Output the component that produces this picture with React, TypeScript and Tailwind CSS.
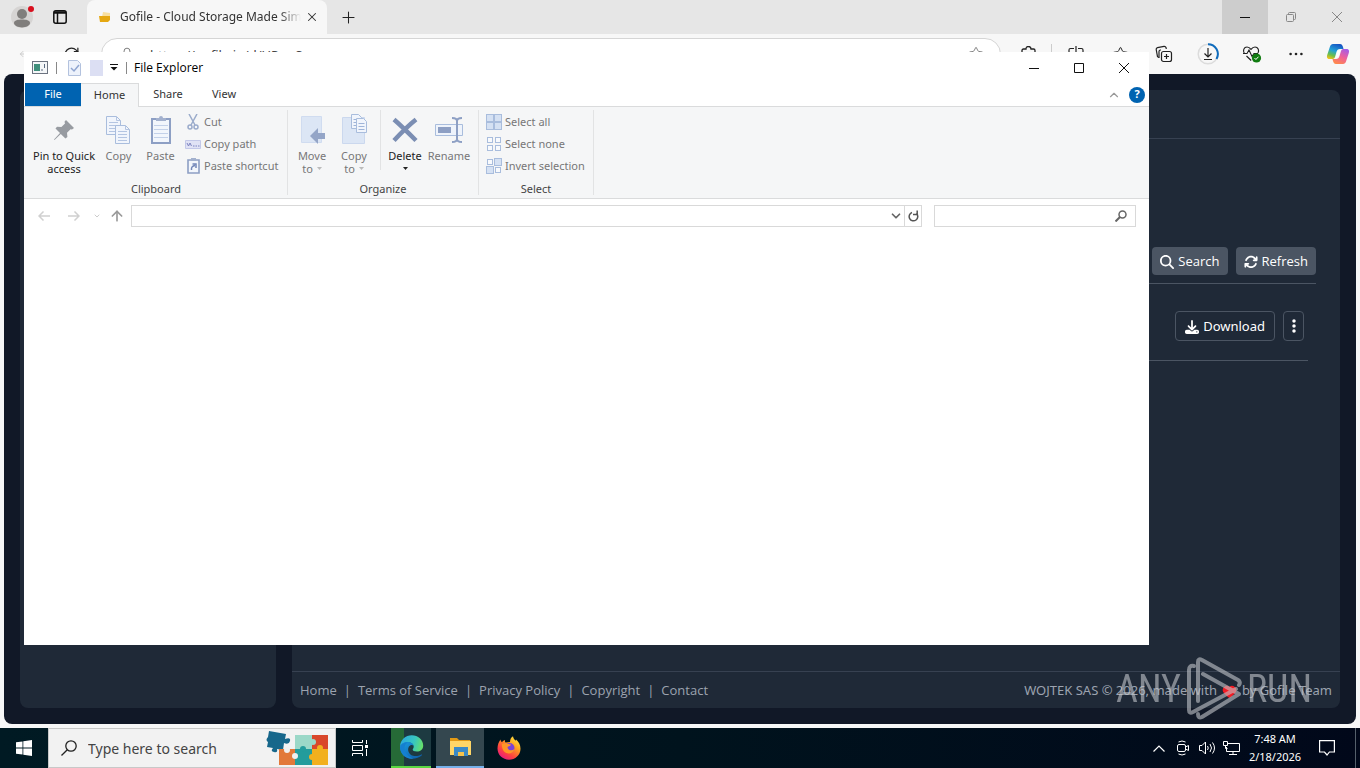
import type { ReactNode } from "react";
import { clsx } from "clsx";
import { FaDownload, FaEllipsisVertical, FaMagnifyingGlass, FaArrowsRotate } from "react-icons/fa6";
import {
  ArrowUp,
  ChevronDown,
  ChevronUp,
  Heart,
  Lock,
  MoveLeft,
  Plus,
  RotateCw,
  Star,
  X,
} from "lucide-react";

const footerLinks = ["Home", "Terms of Service", "Privacy Policy", "Copyright", "Contact"];

/* ---------- Edge ---------- */

function BrowserTabs() {
  return (
    <div className="flex h-[34px] shrink-0 items-center bg-[#e6e6e6]">
      <button aria-label="Profile" className="ml-2 flex h-7 w-7 items-center justify-center">
        <svg width="26" height="26" viewBox="0 0 26 26">
          <circle cx="13" cy="13" r="11" fill="#d6d4d3" />
          <circle cx="13" cy="10" r="5" fill="#807e7c" />
          <path d="M5 19c0-3 4-3.600 8-3.600s8 .6 8 3.600c0 2.600-4 4.400-8 4.400S5 21.600 5 19z" fill="#807e7c" />
          <circle cx="22" cy="5" r="3" fill="#d80f1e" />
        </svg>
      </button>
      <button aria-label="Tab actions" className="ml-4 flex h-7 w-4 items-center justify-center">
        <svg width="14" height="14" viewBox="0 0 14 14" fill="none" stroke="#111">
          <rect x=".8" y=".8" width="12.400" height="12.400" rx="2" strokeWidth="1.500" />
          <path d="M1 2.500h12" strokeWidth="2.500" />
          <path d="M4.500 3v10" strokeWidth="1.500" />
        </svg>
      </button>
      <div className="ml-[19px] flex h-full w-60 items-center rounded-t-lg bg-[#f7f7f7] pr-2 pl-3">
        <svg width="12" height="12" viewBox="0 0 12 12" className="shrink-0">
          <path d="M4 1l7 1v4H3z" fill="#f8dfa0" />
          <path d="M0 5h11v4l-2 2H1z" fill="#e5a812" />
        </svg>
        <span className="ml-[9px] flex-1 overflow-hidden mask-r-from-88% text-xs whitespace-nowrap text-[#333]">
          Gofile - Cloud Storage Made Simple
        </span>
        <button aria-label="Close tab" className="ml-1">
          <X size={14} strokeWidth={1.8} color="#333" />
        </button>
      </div>
      <button aria-label="New tab" className="ml-3">
        <Plus size={19} strokeWidth={1.3} color="#222" />
      </button>
      <div className="ml-auto flex h-full">
        <button aria-label="Minimize" className="flex w-[46px] items-center justify-center bg-[#cdcdcd]">
          <svg width="10" height="10" viewBox="0 0 10 10">
            <path d="M0 5.500h10" stroke="#111" />
          </svg>
        </button>
        <button aria-label="Restore" className="flex w-[46px] items-center justify-center">
          <svg width="10" height="10" viewBox="0 0 10 10" fill="none" stroke="#888">
            <rect x=".5" y="2.500" width="7" height="7" rx="1" />
            <path d="M2.500 2V1.500q0-1 1-1h5q1 0 1 1v5q0 1-1 1h-.5" />
          </svg>
        </button>
        <button aria-label="Close" className="flex w-[46px] items-center justify-center">
          <svg width="10" height="10" viewBox="0 0 10 10">
            <path d="m0 0 10 10M10 0 0 10" stroke="#888" />
          </svg>
        </button>
      </div>
    </div>
  );
}

function ToolButton({ label, children }: { label: string; children: ReactNode }) {
  return (
    <button aria-label={label} className="flex h-full w-11 shrink-0 items-center justify-center">
      {children}
    </button>
  );
}

function BrowserToolbar() {
  return (
    <div className="flex h-10 shrink-0 items-center bg-[#f7f7f7] pl-[5px]">
      <ToolButton label="Back">
        <MoveLeft size={16} strokeWidth={1.2} color="#c4c4c4" />
      </ToolButton>
      <ToolButton label="Reload">
        <RotateCw size={17} strokeWidth={1.7} color="#222" />
      </ToolButton>
      <div className="ml-2 flex h-8 flex-1 items-center rounded-full border border-[#d5d5d5] bg-white pr-4 pl-[18px]">
        <Lock size={14} strokeWidth={1.3} color="#555" />
        <input
          aria-label="Address and search bar"
          defaultValue="https://gofile.io/d/UPwcS"
          className="ml-4 min-w-0 flex-1 pt-1 text-[13px] text-[#444]"
        />
        <Star size={16} strokeWidth={1.2} color="#666" />
      </div>
      <span className="w-[6px]" />
      <ToolButton label="Extensions">
        <svg width="16" height="16" viewBox="0 0 16 16" fill="none" stroke="#222" strokeWidth="1.300">
          <path d="M1 4.500Q1 3 2.500 3H5q0-2.500 2.500-2.500T10 3h2.500Q14 3 14 4.500V7q-2.500 0-2.500 2.200T14 11.500V14q0 1.500-1.500 1.500h-10Q1 15.500 1 14z" />
        </svg>
      </ToolButton>
      <span className="mr-0.5 h-5 w-px bg-[#ccc]" />
      <ToolButton label="Split screen">
        <svg width="16" height="16" viewBox="0 0 16 16" fill="none" stroke="#222" strokeWidth="1.200">
          <path d="M6 2.500H2.500Q1 2.500 1 4v8q0 1.500 1.500 1.500H6M10 2.500h3.500Q15 2.500 15 4v8q0 1.500-1.500 1.500H10M8 0v16" />
        </svg>
      </ToolButton>
      <ToolButton label="Favorites">
        <Star size={17} strokeWidth={1.4} color="#222" />
      </ToolButton>
      <ToolButton label="Collections">
        <svg width="18" height="18" viewBox="0 0 18 18" fill="none" stroke="#222" strokeWidth="1.200">
          <path d="M4 12.500 2.500 11.700 1.200 4.500Q1 3 2.500 2.600L9 1.300q1.500-.2 2 1.200l.3 1.500" />
          <path d="M4 13V6.500Q4 5 5.500 5H6" />
          <rect x="6.500" y="6.500" width="10" height="10" rx="2" />
          <path d="M11.500 9v5M9 11.500h5" />
        </svg>
      </ToolButton>
      <ToolButton label="Downloads">
        <svg width="22" height="22" viewBox="0 0 22 22" fill="none">
          <circle cx="11" cy="11" r="9.800" stroke="#dcdcdc" strokeWidth="1.500" />
          <path d="M11 1.200a9.800 9.800 0 0 1 8.500 14.700" stroke="#0f6cbd" strokeWidth="2" />
          <path d="M11 5v9M7.500 10.500 11 14l3.500-3.500M7 16.500h8" stroke="#222" strokeWidth="1.200" />
        </svg>
      </ToolButton>
      <ToolButton label="Browser essentials">
        <svg width="20" height="18" viewBox="0 0 20 18" fill="none">
          <path d="M2.300 8.500C.5 5.500 2 2 5 2c2 0 3 1 4 2.300C10 3 11 2 13 2c3 0 4.500 3.200 3 6M4.500 11l4.700 4.500" stroke="#222" strokeWidth="1.200" />
          <path d="M1 8.500h4l2-3.500 3 6.500 2-3h4" stroke="#222" strokeWidth="1.100" />
          <circle cx="14.500" cy="13" r="4.600" fill="#107c10" />
          <path d="m12.500 13 1.400 1.500 2.600-2.800" stroke="#fff" />
        </svg>
      </ToolButton>
      <ToolButton label="Settings and more">
        <svg width="14" height="4" viewBox="0 0 14 4" fill="#222">
          <circle cx="1.600" cy="2" r="1.300" />
          <circle cx="7" cy="2" r="1.300" />
          <circle cx="12.400" cy="2" r="1.300" />
        </svg>
      </ToolButton>
      <button aria-label="Copilot" className="mr-0.5 flex h-full w-10 shrink-0 items-center justify-center">
        <svg width="24" height="22" viewBox="0 0 24 22">
          <defs>
            <linearGradient id="copilot-a" x1=".6" y1="0" x2=".2" y2="1">
              <stop offset="0" stopColor="#1657c5" />
              <stop offset=".45" stopColor="#22a2d6" />
              <stop offset=".75" stopColor="#6bbf4b" />
              <stop offset="1" stopColor="#f2c21a" />
            </linearGradient>
            <linearGradient id="copilot-b" x1=".8" y1="0" x2=".3" y2="1">
              <stop offset="0" stopColor="#a45be8" />
              <stop offset=".5" stopColor="#ee5f9b" />
              <stop offset="1" stopColor="#ff8a4c" />
            </linearGradient>
          </defs>
          <path d="M7 1h7c2 0 2.500 1.500 3 3l.5 2H14c-2 0-3 1-3.500 3L9 14c-.5 1.500-1.500 2-3 2H3.500C1 16 .6 14 1.200 12L4 3.500C4.500 2 5.500 1 7 1z" fill="url(#copilot-a)" />
          <path d="M17 21h-7c-2 0-2.500-1.500-3-3l-.5-2H10c2 0 3-1 3.500-3L15 8c.5-1.500 1.500-2 3-2h2.500c2.500 0 2.900 2 2.300 4L20 18.500c-.5 1.500-1.500 2.500-3 2.500z" fill="url(#copilot-b)" />
          <path d="m11 8 3.500-1.500L13 13l-3 2z" fill="#fff" opacity=".75" />
        </svg>
      </button>
    </div>
  );
}

function GofilePage() {
  return (
    <div className="flex min-h-0 flex-1 gap-4 rounded-lg bg-[#111827] p-4 font-['Open_Sans','Noto_Sans',sans-serif]">
      <aside className="w-64 shrink-0 rounded-lg bg-[#1f2937]" />
      <main className="flex min-w-0 flex-1 flex-col rounded-lg bg-[#1f2937] text-white">
        <header className="h-[49px] shrink-0 border-b border-[#374151]" />
        <section className="flex-1 px-6 pt-[108px]">
          <div className="flex justify-end gap-2 border-b border-[#4b5563] pb-2">
            <button className="flex h-7 items-center gap-1 rounded bg-[#4b5563] px-2 pt-px text-[13px]">
              <FaMagnifyingGlass size={14} /> Search
            </button>
            <button className="flex h-7 items-center gap-1 rounded bg-[#4b5563] px-2 pt-px text-[13px]">
              <FaArrowsRotate size={14} /> Refresh
            </button>
          </div>
          <div className="mx-2 mt-2 flex justify-end gap-2 border-b border-[#4b5563] px-1 pt-[19px] pb-[19px]">
            <button className="flex h-[30px] items-center gap-1 rounded border border-[#4b5563] px-[9px] pt-px font-['Noto_Sans',sans-serif] text-[13px]">
              <FaDownload size={14} /> Download
            </button>
            <button
              aria-label="More actions"
              className="flex h-[30px] w-[21px] items-center justify-center rounded border border-[#4b5563]"
            >
              <FaEllipsisVertical size={16} />
            </button>
          </div>
        </section>
        <footer className="flex h-[37px] shrink-0 items-center justify-between border-t border-[#374151] px-2 pt-0.5 text-[13px] text-[#9ca3af]">
          <nav className="flex">
            {footerLinks.map((link, i) => (
              <span key={link}>
                {i > 0 && <span className="px-[7px]">|</span>}
                <a href="#">{link}</a>
              </span>
            ))}
          </nav>
          <p className="flex items-center gap-1 font-['Noto_Sans',sans-serif]">
            WOJTEK SAS © 2026, made with
            <Heart size={15} fill="#f31b24" color="#f31b24" className="mx-px" />
            by Gofile Team
          </p>
        </footer>
      </main>
    </div>
  );
}

function Watermark() {
  return (
    <div className="absolute right-12 bottom-[47px] flex items-center gap-1 font-['Roboto_Condensed','Open_Sans_Condensed','Roboto',sans-serif] text-[38px] leading-none text-[#c3c6cb] opacity-60">
      <span>ANY</span>
      <svg width="58" height="64" viewBox="0 0 58 64" fill="none" stroke="currentColor" strokeWidth="4" strokeLinejoin="round" strokeLinecap="round">
        <path d="M9 9q-5-1-5 4v40q0 4 4 2l43-23" />
        <path d="M13 44V5q0-4 4-2l36 20q3 2 1 5" />
        <path d="M18 17l36 20-37 23q-4 2-4-3" />
      </svg>
      <span>RUN</span>
    </div>
  );
}

/* ---------- File Explorer ---------- */

function WindowTitle() {
  return (
    <div className="flex h-[31px] shrink-0 items-center pl-2">
      <svg width="16" height="14" viewBox="0 0 16 14">
        <rect x=".5" y=".5" width="15" height="12" fill="#f4f6f8" stroke="#6c7380" />
        <rect x="2" y="3" width="6" height="7" fill="#3f8f7c" />
        <path d="M10 8v2M12.500 3v4" stroke="#5a6a80" />
      </svg>
      <span className="ml-2 h-3 w-px bg-[#888]" />
      <button aria-label="Properties" className="ml-[11px]">
        <svg width="13" height="16" viewBox="0 0 13 16" fill="none">
          <path d="M.5.500h9l3 3v12H.5z" fill="#edf2fb" stroke="#b3c2de" />
          <path d="m3 8 3 3 5-6" stroke="#8fa5d0" strokeWidth="1.500" />
        </svg>
      </button>
      <button aria-label="New folder" className="ml-[9px] h-4 w-[13px] bg-[#dcdff3]" />
      <button aria-label="Customize toolbar" className="ml-[7px]">
        <svg width="8" height="7" viewBox="0 0 8 7">
          <path d="M0 .5h8" stroke="#111" />
          <path d="M.5 3h7L4 6.500z" fill="#111" />
        </svg>
      </button>
      <span className="ml-2 h-3 w-px bg-[#888]" />
      <h1 className="ml-[7px] font-['Open_Sans','Noto_Sans',sans-serif] text-xs text-black">File Explorer</h1>
      <div className="ml-auto flex h-full pr-[3px]">
        <button aria-label="Minimize window" className="flex w-[45px] items-center justify-center">
          <svg width="10" height="10" viewBox="0 0 10 10">
            <path d="M0 5.500h10" stroke="#111" />
          </svg>
        </button>
        <button aria-label="Maximize window" className="flex w-[45px] items-center justify-center">
          <svg width="10" height="10" viewBox="0 0 10 10">
            <path d="M.5.500h9v9h-9z" stroke="#111" fill="none" />
          </svg>
        </button>
        <button aria-label="Close window" className="flex w-[45px] items-center justify-center">
          <svg width="10" height="10" viewBox="0 0 10 10">
            <path d="m0 0 10 10M10 0 0 10" stroke="#111" />
          </svg>
        </button>
      </div>
    </div>
  );
}

function RibbonTabs() {
  return (
    <div className="flex h-6 shrink-0 border-b border-[#dadbdc] pl-px text-[11px] text-[#333]">
      <button className="w-14 bg-[#0063b1] text-white">File</button>
      <button className="-mb-px w-[58px] border-t border-r border-[#dadbdc] bg-[#f5f6f7]">Home</button>
      <button className="w-[58px]">Share</button>
      <button className="w-[54px]">View</button>
      <div className="ml-auto flex items-center gap-2 pr-1">
        <ChevronUp size={14} strokeWidth={2} color="#999" />
        <button
          aria-label="Help"
          className="flex h-4 w-4 items-center justify-center rounded-full bg-[#0063b1] text-[11px] font-bold text-white"
        >
          ?
        </button>
      </div>
    </div>
  );
}

interface BigButtonProps {
  icon: ReactNode;
  lines: string[];
  enabled?: boolean;
  arrow?: boolean;
  className: string;
}

function BigButton({ icon, lines, enabled, arrow, className }: BigButtonProps) {
  return (
    <button
      className={clsx(
        "flex shrink-0 flex-col items-center pt-1 text-[11px] leading-[13px] whitespace-nowrap",
        enabled ? "text-[#222]" : "text-[#777]",
        className,
      )}
    >
      <span className="mb-[3px] flex h-8 items-center">{icon}</span>
      {lines.map((line, i) => (
        <span key={i} className="flex min-h-[13px] items-center gap-1">
          {line}
          {arrow && i === lines.length - 1 && (
            <svg width="5" height="3" viewBox="0 0 5 3" fill={enabled ? "#222" : "#bbb"}>
              <path d="M0 0h5L2.500 3z" />
            </svg>
          )}
        </span>
      ))}
    </button>
  );
}

function SmallButton({ icon, children }: { icon: ReactNode; children: ReactNode }) {
  return (
    <button className="flex h-[22px] items-center gap-[3px] text-[11px] whitespace-nowrap text-[#777]">
      <span className="flex w-4 justify-center">{icon}</span>
      {children}
    </button>
  );
}

function Group({ name, className, children }: { name: string; className: string; children: ReactNode }) {
  return (
    <div className={clsx("my-[3px] flex shrink-0 flex-col border-r border-[#e2e3e4]", className)}>
      <div className="flex flex-1">{children}</div>
      <div className="h-3 text-center text-[11px] leading-3 text-[#444]">{name}</div>
    </div>
  );
}

const pinIcon = (
  <svg width="22" height="22" viewBox="0 0 22 22" fill="#979ba1">
    <path d="m13 1 8 8-2 1.500-1.500-.3-3.500 3.500.4 4.300-2 1.500-4.600-4.600L1.500 21 1 20.500l6-6.500-4.500-4.500L4 7.800l4.400.2L12 4.600l-.5-1.800z" />
  </svg>
);

const page = (x: number, y: number) => (
  <g transform={`translate(${x} ${y})`}>
    <path d="M.5.500h10l4 4v14H.5z" fill="#f1f5fc" stroke="#a9bddd" />
    <path d="M10.500.5v4h4M3 6.500h9M3 9.500h9M3 12.500h9M3 15.500h9" fill="none" stroke="#b4c5e2" />
  </g>
);

const smallPage = (x: number, y: number) => (
  <g transform={`translate(${x} ${y})`}>
    <path d="M.5.500h7l3 3v11H.5z" fill="#f1f5fc" stroke="#a9bddd" />
    <path d="M2.500 5.500h6M2.500 8.500h6M2.500 11.500h6" fill="none" stroke="#9fb4d8" />
  </g>
);

const copyIcon = (
  <svg width="25" height="30" viewBox="0 0 25 30">
    {page(0, 1)}
    {page(9, 10)}
  </svg>
);

const pasteIcon = (
  <svg width="22" height="30" viewBox="0 0 22 30">
    <path d="M2 4h18v24H2z" fill="#f2f6fc" stroke="#8d9fc4" strokeWidth="2" />
    <path d="M6 6V3h3q0-2 2-2t2 2h3v3z" fill="#a3b1ce" />
    <path d="M4 10.500h14M4 14.500h14M4 18.500h14M4 22.500h14" stroke="#c3d1e9" />
  </svg>
);

const moveIcon = (
  <svg width="26" height="30" viewBox="-2 0 26 30">
    <path d="M.5 1.500h20v26H.5z" fill="#dce6f5" stroke="#d0dcf0" />
    <path d="m9 21 8-8v5h8v6h-8v5z" fill="#94a5c7" />
  </svg>
);

const copyToIcon = (
  <svg width="27" height="32" viewBox="-1 0 27 32">
    <path d="M.5 3.500h22v26H.5z" fill="#dce6f5" stroke="#cbd8ee" />
    {smallPage(9, 0)}
    {smallPage(14, 4)}
  </svg>
);

const deleteIcon = (
  <svg width="26" height="26" viewBox="0 0 26 26">
    <path d="M2 2.500c7 6 14 13 22 21M24 2.500C17 8 9 16 2 23.500" stroke="#7b8eb3" strokeWidth="4.500" fill="none" />
  </svg>
);

const renameIcon = (
  <svg width="29" height="26" viewBox="0 0 29 26" fill="none">
    <path d="M.5 7.500h27v11H.5z" fill="#eef3fb" stroke="#a9bddd" />
    <path d="M3 10h13v6H3z" fill="#8d9fc4" />
    <path d="M22 2v22M17 1q5 0 5 3 0-3 5-3M17 25q5 0 5-3 0 3 5 3" stroke="#8d9fc4" strokeWidth="2" />
  </svg>
);

const cutIcon = (
  <svg width="12" height="16" viewBox="0 0 12 16" fill="none" stroke="#9aabcb" strokeWidth="1.500">
    <path d="m2 0 6 11M10 0 4 11" />
    <circle cx="3" cy="13" r="2" />
    <circle cx="9" cy="13" r="2" />
  </svg>
);

const pathIcon = (
  <svg width="16" height="9" viewBox="0 0 16 9">
    <path d="M.5.500h15v8H.5z" fill="#e0e2f5" stroke="#c3c8e8" />
    <path d="m2 3 1.500 3L5 3l1.500 3M8 6h1.500M10.500 6H12M13 6h1.500" stroke="#7d84c0" fill="none" />
  </svg>
);

const shortcutIcon = (
  <svg width="13" height="16" viewBox="0 0 13 16" fill="none">
    <path d="M1 2h11v13H1z" fill="#f2f6fc" stroke="#8d9fc4" strokeWidth="1.600" />
    <path d="M4 0h5v3H4z" fill="#a3b1ce" />
    <path d="M4.500 12Q4 8 8 7.500M5.500 6H9v4" stroke="#7287b8" strokeWidth="1.500" />
  </svg>
);

function squares(filled: boolean[]) {
  return (
    <svg width="16" height="16" viewBox="0 0 16 16" stroke="#a9bddd">
      {filled.map((on, i) => (
        <rect
          key={i}
          x={(i % 2) * 8 + (on ? 0.5 : 1.5)}
          y={Math.floor(i / 2) * 8 + (on ? 0.5 : 1.5)}
          width={on ? 7 : 5}
          height={on ? 7 : 5}
          fill={on ? "#d5e1f3" : "#f8fafd"}
        />
      ))}
    </svg>
  );
}

function Ribbon() {
  return (
    <div className="flex h-[92px] shrink-0 overflow-hidden border-b border-[#dadbdc] bg-[#f5f6f7] pl-px">
      <Group name="Clipboard" className="w-[263px]">
        <BigButton className="ml-1 w-[70px]" enabled icon={pinIcon} lines={["Pin to Quick", "access"]} />
        <BigButton className="w-[39px]" icon={copyIcon} lines={["Copy"]} />
        <BigButton className="w-[45px]" icon={pasteIcon} lines={["Paste"]} />
        <div className="ml-[2px] pt-[1px]">
          <SmallButton icon={cutIcon}>Cut</SmallButton>
          <SmallButton icon={pathIcon}>Copy path</SmallButton>
          <SmallButton icon={shortcutIcon}>Paste shortcut</SmallButton>
        </div>
      </Group>
      <Group name="Organize" className="w-[191px]">
        <BigButton className="ml-1 w-10" arrow icon={moveIcon} lines={["Move", "to"]} />
        <BigButton className="w-11" arrow icon={copyToIcon} lines={["Copy", "to"]} />
        <span className="ml-1 h-[60px] w-px bg-[#e2e3e4]" />
        <BigButton className="ml-[2px] w-11" enabled arrow icon={deleteIcon} lines={["Delete", ""]} />
        <BigButton className="w-11" icon={renameIcon} lines={["Rename"]} />
      </Group>
      <Group name="Select" className="w-[115px]">
        <div className="ml-[7px] pt-[1px]">
          <SmallButton icon={squares([true, true, true, true])}>Select all</SmallButton>
          <SmallButton icon={squares([false, false, false, false])}>Select none</SmallButton>
          <SmallButton icon={squares([false, true, true, false])}>Invert selection</SmallButton>
        </div>
      </Group>
    </div>
  );
}

function AddressRow() {
  return (
    <div className="flex h-[34px] shrink-0 items-center pr-[13px] pl-3">
      <button aria-label="Back in history" className="flex w-4 justify-center">
        <svg width="12" height="10" viewBox="0 0 12 10" fill="none" stroke="#d0d0d0" strokeWidth="1.500">
          <path d="M12 5H1M5.500.5 1 5l4.500 4.500" />
        </svg>
      </button>
      <button aria-label="Forward in history" className="ml-[14px] flex w-4 justify-center">
        <svg width="12" height="10" viewBox="0 0 12 10" fill="none" stroke="#d0d0d0" strokeWidth="1.500">
          <path d="M0 5h11M6.500.5 11 5 6.500 9.500" />
        </svg>
      </button>
      <button aria-label="Recent locations" className="ml-[11px] w-2">
        <ChevronDown size={8} strokeWidth={3} color="#ccc" />
      </button>
      <button aria-label="Up" className="ml-2 w-4">
        <ArrowUp size={16} strokeWidth={2.5} color="#9a9a9a" />
      </button>
      <div className="ml-[6px] flex h-[22px] flex-1 items-center border border-[#d9d9d9]">
        <input aria-label="Location" className="h-full min-w-0 flex-1 px-2 text-xs" />
        <button aria-label="Previous locations" className="flex w-4 justify-center">
          <ChevronDown size={14} strokeWidth={3} color="#666" />
        </button>
        <button
          aria-label="Refresh location"
          className="flex h-full w-[17px] items-center justify-center border-l border-[#d9d9d9]"
        >
          <svg width="11" height="12" viewBox="0 0 11 12" fill="none" stroke="#555" strokeWidth="1.500">
            <path d="M8.500 3.500A4.300 4.300 0 1 1 4 2.500" />
            <path d="M5 4.500h4.200V.5" />
          </svg>
        </button>
      </div>
      <div className="ml-3 flex h-[22px] w-[202px] items-center border border-[#d9d9d9] pr-2">
        <input aria-label="Search files" className="h-full min-w-0 flex-1 px-2 text-xs" />
        <svg width="12" height="12" viewBox="0 0 12 12" fill="none" stroke="#666">
          <circle cx="7.500" cy="4.500" r="3.500" strokeWidth="1.500" />
          <path d="M5 7 .5 11.500" strokeWidth="2" />
        </svg>
      </div>
    </div>
  );
}

function ExplorerWindow() {
  return (
    <section className="absolute top-[52px] right-[211px] bottom-[123px] left-6 flex flex-col bg-white">
      <WindowTitle />
      <RibbonTabs />
      <Ribbon />
      <AddressRow />
    </section>
  );
}

/* ---------- Taskbar ---------- */

function PuzzleArt() {
  return (
    <svg width="64" height="36" viewBox="0 0 64 36">
      <path d="M4 1l17 3-1 5q6-2 5 2t-6 2l-1 7-6-1q1 4-3 3t-1-4l-6-1 1-5Q0 10 3 7z" fill="#17678b" />
      <path d="M14 19h16v16H14z" fill="#e2793a" />
      <path d="M30 19h17v16H30z" fill="#239c9c" />
      <path d="M47 19h16v16H47z" fill="#f2b01e" />
      <path d="M30 5h17v14H30z" fill="#9bd8c8" />
      <path d="M47 5h16v14H47z" fill="#d9472b" />
      <circle cx="48" cy="12" r="3" fill="#9bd8c8" />
      <circle cx="30" cy="26" r="3" fill="#f0f0f0" />
      <circle cx="38" cy="19" r="3" fill="#239c9c" />
      <circle cx="55" cy="18" r="3" fill="#f2b01e" />
      <circle cx="47" cy="27" r="3" fill="#f2b01e" />
      <circle cx="22" cy="20" r="3" fill="#f0f0f0" />
    </svg>
  );
}

function EdgeLogo() {
  return (
    <svg width="25" height="24" viewBox="0 0 24 24">
      <defs>
        <linearGradient id="edge-top" x1="0" y1=".3" x2="1" y2=".5">
          <stop offset="0" stopColor="#2ba8e0" />
          <stop offset=".6" stopColor="#38c6c0" />
          <stop offset="1" stopColor="#66df6a" />
        </linearGradient>
        <linearGradient id="edge-low" x1="0" y1="0" x2="1" y2="1">
          <stop offset="0" stopColor="#1b9de2" />
          <stop offset="1" stopColor="#0c59a4" />
        </linearGradient>
      </defs>
      <path d="M.5 11C1 5 6 .3 12.300.300 18.500.300 23.700 5 23.700 10.500c0 4-3 6-6.300 6-3 0-4.200-1-4.200-2 0-.7 1-1.200 1-3 0-2.300-2.200-4-5.200-4C5 7.500 1.500 9 .5 11z" fill="url(#edge-top)" />
      <path d="M.5 11C1.500 8.500 5 7 8.500 7c3 0 5 1.500 5.500 3.500-1.500-1-3.500-.5-4.500 1-2 3-.5 8 4 9.300 3 .8 6 0 8.300-1.300.6-.3 1 .2.600.700C20 22.500 16.500 23.700 12.500 23.700 5.500 23.700.2 18.500.5 11z" fill="url(#edge-low)" />
      <path d="M9 7.300c-4 1.500-5 6-3 10 1.500 3 4.500 5.500 8 6.200-7 1-13-4-13.500-11.500C1.500 8.700 5 7 9 7.300z" fill="#1580d0" />
    </svg>
  );
}

function FolderLogo() {
  return (
    <svg width="23" height="20" viewBox="0 0 23 20">
      <path d="M1 1h7l2 2h11v4H1z" fill="#e39a15" />
      <path d="M1 4h21v14H1z" fill="#ffd667" />
      <path d="M5 10h14v9h-4v-4H9v4H5z" fill="#3b8ac6" />
      <path d="M9 15h6v4H9z" fill="#f5c34c" />
    </svg>
  );
}

function FirefoxLogo() {
  return (
    <svg width="24" height="24" viewBox="0 0 24 24">
      <defs>
        <linearGradient id="fox" x1=".9" y1="0" x2=".2" y2="1">
          <stop offset="0" stopColor="#fff04a" />
          <stop offset=".35" stopColor="#ffa51f" />
          <stop offset=".7" stopColor="#ff4340" />
          <stop offset="1" stopColor="#e41587" />
        </linearGradient>
      </defs>
      <path d="M3.500 3.500c.2 1.400.8 2.200 1.500 2.800C6 4.800 7 4.200 8 4c-.3 1 0 1.800.5 2.500L13 6c0-2.500 1-4.500 3-5.700.2 2 1.300 3.200 2.700 4.500L19 3.500c2.500 2 4.500 5 4.500 9.200C23.500 19 18.300 23.700 12 23.700S.5 19 .5 12.500c0-3.700 1.200-6.500 3-9z" fill="url(#fox)" />
      <circle cx="12.500" cy="12" r="5" fill="#7a42d8" />
      <path d="M5 8c2-1 4-1.200 6-.2 1 .4 2 .7 3 .7-.3 1.500-2 1.700-3.500 2.500 0 3 4 4.500 7 2-1 3.500-4 5-7 4.300C6.500 16.500 4.500 12 5 8z" fill="#ff9626" />
    </svg>
  );
}

function Taskbar() {
  return (
    <div className="flex h-10 shrink-0 items-center bg-linear-to-r from-[#001a23] via-[#00131d] to-[#01081a] text-white">
      <button aria-label="Start" className="flex h-full w-12 items-center justify-center">
        <svg width="16" height="16" viewBox="0 0 16 16" fill="#fff">
          <path d="M0 2.300 6.500 1.400v6.200H0zM7.300 1.300 16 0v7.600H7.300zM0 8.400h6.500v6.200L0 13.700zM7.300 8.400H16V16l-8.700-1.300z" />
        </svg>
      </button>
      <label className="flex h-full w-72 items-center border border-[#c8c8c8] bg-[#f2f2f2] pr-[6px] pl-3">
        <svg width="16" height="16" viewBox="0 0 16 16" fill="none" stroke="#222" strokeWidth="1.300">
          <circle cx="10" cy="6" r="5.200" />
          <path d="M6.300 9.700.5 15.500" />
        </svg>
        <input
          placeholder="Type here to search"
          className="ml-[11px] min-w-0 flex-1 pt-px text-sm placeholder:text-[#444]"
        />
        <PuzzleArt />
      </label>
      <button aria-label="Task view" className="flex h-full w-12 items-center justify-center">
        <svg width="17" height="16" viewBox="0 0 17 16" fill="none" stroke="#fff">
          <path d="M.5 0v2.500h10V0M.5 16v-2.500h10V16M.5 5.500h10v5H.5zM14.500 0v4M14.500 9v7" />
          <path d="M13 5h3v3h-3z" fill="#fff" stroke="none" />
        </svg>
      </button>
      <button
        aria-label="Microsoft Edge"
        className="ml-[7px] flex h-full w-10 items-center justify-center border-b-2 border-[#5bd742] bg-linear-to-r from-[#266a37] from-33% to-[#1d3a41] to-33%"
      >
        <EdgeLogo />
      </button>
      <button
        aria-label="File Explorer"
        className="ml-[5px] flex h-full w-12 items-center justify-center border-b-2 border-[#76b0ea] bg-[#34474f]"
      >
        <FolderLogo />
      </button>
      <button aria-label="Firefox" className="flex h-full w-[50px] items-center justify-center">
        <FirefoxLogo />
      </button>
      <div className="ml-auto flex h-full items-center">
        <button aria-label="Show hidden icons" className="flex w-6 justify-center">
          <svg width="12" height="7" viewBox="0 0 12 7" fill="none" stroke="#fff" strokeWidth="1.200">
            <path d="m.5 6.500 5.500-5.500 5.500 5.500" />
          </svg>
        </button>
        <button aria-label="Meet now" className="flex w-6 justify-center">
          <svg width="14" height="16" viewBox="0 0 14 16" fill="none" stroke="#fff">
            <rect x="1.500" y="4.500" width="8" height="7" rx="1.500" />
            <path d="m9.500 7 3-1.500v5l-3-1.500M2.500 2Q6 .0 9.500 2M2.500 14q3.500 2 7 0" />
          </svg>
        </button>
        <button aria-label="Volume" className="flex w-6 justify-center">
          <svg width="17" height="14" viewBox="0 0 17 14" fill="none" stroke="#fff">
            <path d="M.5 4.500h2.500L6.500 1v12L3 9.500H.5zM8.500 5q1.500 2 0 4M11 3q3 4 0 8M13.500 1.500q4 5.500 0 11" />
          </svg>
        </button>
        <button aria-label="Network" className="flex w-6 justify-center">
          <svg width="17" height="14" viewBox="0 0 17 14" fill="none" stroke="#fff">
            <path d="M5 2.500h11.500v8H3.500V6M10 10.500v3M6 13.500h8M.5.500h4v4h-4zM2.500 4.500v3h2" />
          </svg>
        </button>
        <div className="w-16 text-center text-[11px] leading-[18px] whitespace-nowrap">
          <div>7:48 AM</div>
          <div>2/18/2026</div>
        </div>
        <button aria-label="Notifications" className="flex w-10 justify-center">
          <svg width="16" height="16" viewBox="0 0 16 16" fill="none" stroke="#fff" strokeWidth="1.200">
            <path d="M.6.600h14.800v11.400h-5L8 15l-2.500-3H.6z" />
          </svg>
        </button>
        <span className="ml-2 h-full w-[5px] border-l border-[#55606b]" />
      </div>
    </div>
  );
}

export default function App() {
  return (
    <div className="relative flex h-screen flex-col overflow-hidden bg-[#f7f7f7] font-['Noto_Sans','Open_Sans',sans-serif]">
      <BrowserTabs />
      <BrowserToolbar />
      <div className="flex min-h-0 flex-1 flex-col px-1 pb-1">
        <GofilePage />
      </div>
      <Taskbar />
      <ExplorerWindow />
      <Watermark />
    </div>
  );
}
